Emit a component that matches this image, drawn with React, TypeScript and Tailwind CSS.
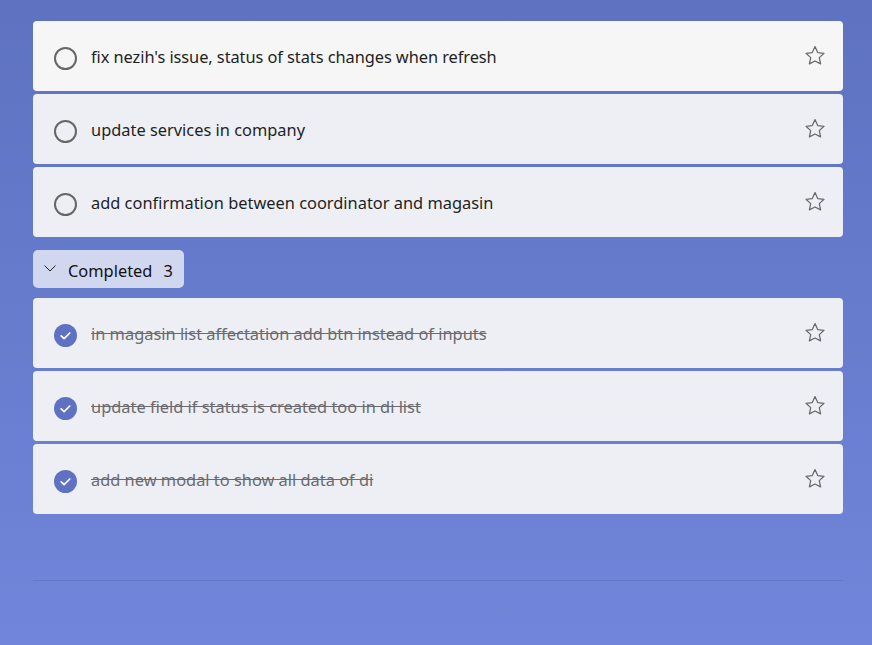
const openTasks = [
  "fix nezih's issue, status of stats changes when refresh",
  "update services in company",
  "add confirmation between coordinator and magasin",
];

const doneTasks = [
  "in magasin list affectation add btn instead of inputs",
  "update field if status is created too in di list",
  "add new modal to show all data of di",
];

function StarIcon() {
  return (
    <svg width="22" height="22" viewBox="0 0 22 22" fill="none" className="mb-[1px] shrink-0">
      <path
        d="M11 1.600l2.700 6 6.300.7-4.700 4.300 1.300 6.300L11 16l-5.600 2.900 1.300-6.300L2 8.300l6.300-.7L11 1.600z"
        stroke="#6a6a6a"
        strokeWidth="1.25"
        strokeLinejoin="round"
      />
    </svg>
  );
}

function TaskRow({ title, done, hovered }: { title: string; done?: boolean; hovered?: boolean }) {
  return (
    <div
      className={`flex h-[70px] items-center rounded pl-[21px] pr-[17px] ${
        hovered ? "bg-[#f6f6f6]" : "bg-[#eeeff4]"
      }`}
    >
      {done ? (
        <svg width="23" height="23" viewBox="0 0 23 23" className="mt-[5px] shrink-0">
          <circle cx="11.5" cy="11.5" r="11.5" fill="#5f71c2" />
          <path d="M7.2 11.800l2.900 2.800 5.700-5.600" fill="none" stroke="#ffffff" strokeWidth="1.7" strokeLinecap="round" strokeLinejoin="round" />
        </svg>
      ) : (
        <div className="mt-[5px] h-[23px] w-[23px] shrink-0 rounded-full border-2 border-[#666666]" />
      )}
      <span
        className={`ml-[14px] mt-[2px] flex-1 text-[16.4px] ${hovered ? "tracking-[-0.07px]" : ""} ${
          done ? "text-[#6b6b6f] line-through" : "text-[#1f1f1f]"
        }`}
      >
        {title}
      </span>
      <StarIcon />
    </div>
  );
}

export default function App() {
  return (
    <div className="h-[645px] w-[872px] overflow-hidden bg-gradient-to-b from-[#5e72c1] to-[#7186da] pl-[33px] pr-[29px] pt-[21px] font-['Noto_Sans',sans-serif]">
      <div className="flex flex-col gap-[3px]">
        {openTasks.map((t, i) => (
          <TaskRow key={t} title={t} hovered={i === 0} />
        ))}
      </div>

      <button className="mt-[13px] flex h-[38px] w-[151px] items-center rounded-[5px] bg-[#d2d7f0] pl-[11px] text-[16.4px] text-[#111111]">
        <svg width="12" height="12" viewBox="0 0 12 12" fill="none" className="mb-[2px] shrink-0">
          <path d="M0.500 3.500l5.500 5.500 5.500-5.500" stroke="#222222" strokeWidth="1" />
        </svg>
        <span className="ml-[12px] mt-[5px]">Completed</span>
        <span className="ml-[11px] mt-[5px]">3</span>
      </button>

      <div className="mt-[10px] flex flex-col gap-[3px]">
        {doneTasks.map((t) => (
          <TaskRow key={t} title={t} done />
        ))}
      </div>

      <div className="mt-[66px] h-px bg-[#6579cb]" />
    </div>
  );
}
